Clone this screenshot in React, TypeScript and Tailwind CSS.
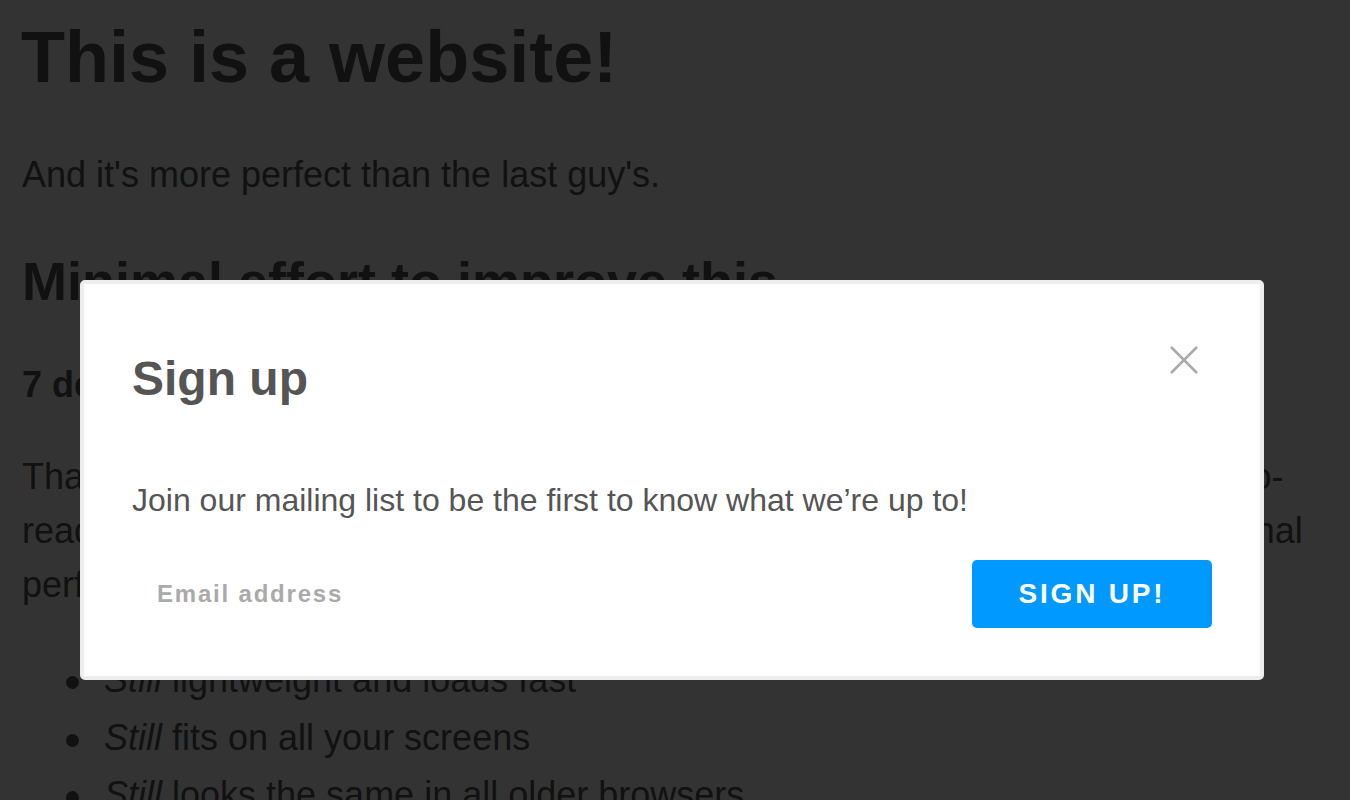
const font = { fontFamily: '"Liberation Sans", Arial, Helvetica, sans-serif' };

const items = [
  { rest: " lightweight and loads fast" },
  { rest: " fits on all your screens" },
  { rest: " looks the same in all older browsers" },
];

const CloseIcon = () => (
  <svg width="28" height="28" viewBox="0 0 28 28" fill="none">
    <path d="M1 1L27 27M27 1L1 27" stroke="#aaaaaa" strokeWidth="2.5" />
  </svg>
);

const SignupModal = () => {
  return (
    <div className="absolute left-[80px] top-[280px] w-[1184px] h-[400px] bg-white border-[4px] border-[#eeeeee] rounded-[5px]">
      <div className="relative h-full p-[48px] flex flex-col">
        <button className="absolute top-[62px] right-[62px] w-[28px] h-[28px]">
          <CloseIcon />
        </button>
        <h2 className="mt-[18px] text-[48px] leading-[1.2] font-bold text-[#555555]">
          Sign up
        </h2>
        <p className="mt-[68px] text-[32px] leading-[1.5] text-[#555555]">
          Join our mailing list to be the first to know what we’re up to!
        </p>
        <div className="mt-auto flex items-center gap-6">
          <input
            type="email"
            placeholder="Email address"
            className="flex-1 h-[68px] pl-[25px] text-[24px] font-bold tracking-[1.8px] text-[#555555] placeholder:text-[#aaaaaa] outline-none border-0 bg-transparent"
            style={font}
          />
          <button className="w-[240px] h-[68px] rounded-[5px] bg-[#0099ff] text-white text-[28px] font-bold tracking-[2.8px] uppercase">
            Sign up!
          </button>
        </div>
      </div>
    </div>
  );
};

const App = () => {
  return (
    <div className="relative h-[800px] overflow-hidden bg-white text-[#555555]" style={font}>
      <div className="px-[22px] pt-[14px]">
        <h1 className="text-[72px] leading-[1.2] font-bold -ml-[1px]">This is a website!</h1>
        <p className="mt-[46px] text-[36px] leading-[1.6]">
          And it's more perfect than the last guy's.
        </p>
        <h2 className="mt-[45px] text-[54px] leading-[1.2] font-bold">
          Minimal effort to improve this
        </h2>
        <h3 className="mt-[49px] text-[36px] leading-[1.2] font-bold">7 declarations</h3>
        <p className="mt-[44px] text-[36px] leading-[1.5] whitespace-nowrap">
          That's all it took: a few rules of CSS and this page became much more easy-to-
          <br />
          read, a whole lot nicer to look at, and it all still loads instantly with zero additional
          <br />
          performance cost. Here's what changed:
        </p>
        <ul className="mt-[39px] pl-[44px] text-[36px] leading-[1.6]">
          {items.map((item, index) => (
            <li key={index} className="flex items-start whitespace-nowrap">
              <span className="mt-[25px] w-[13px] h-[13px] rounded-full bg-current shrink-0" />
              <span className="ml-[25px]">
                <em>Still</em>
                {item.rest}
              </span>
            </li>
          ))}
        </ul>
      </div>
      <div className="absolute inset-0 bg-black/80" />
      <SignupModal />
    </div>
  );
};

export default App;
